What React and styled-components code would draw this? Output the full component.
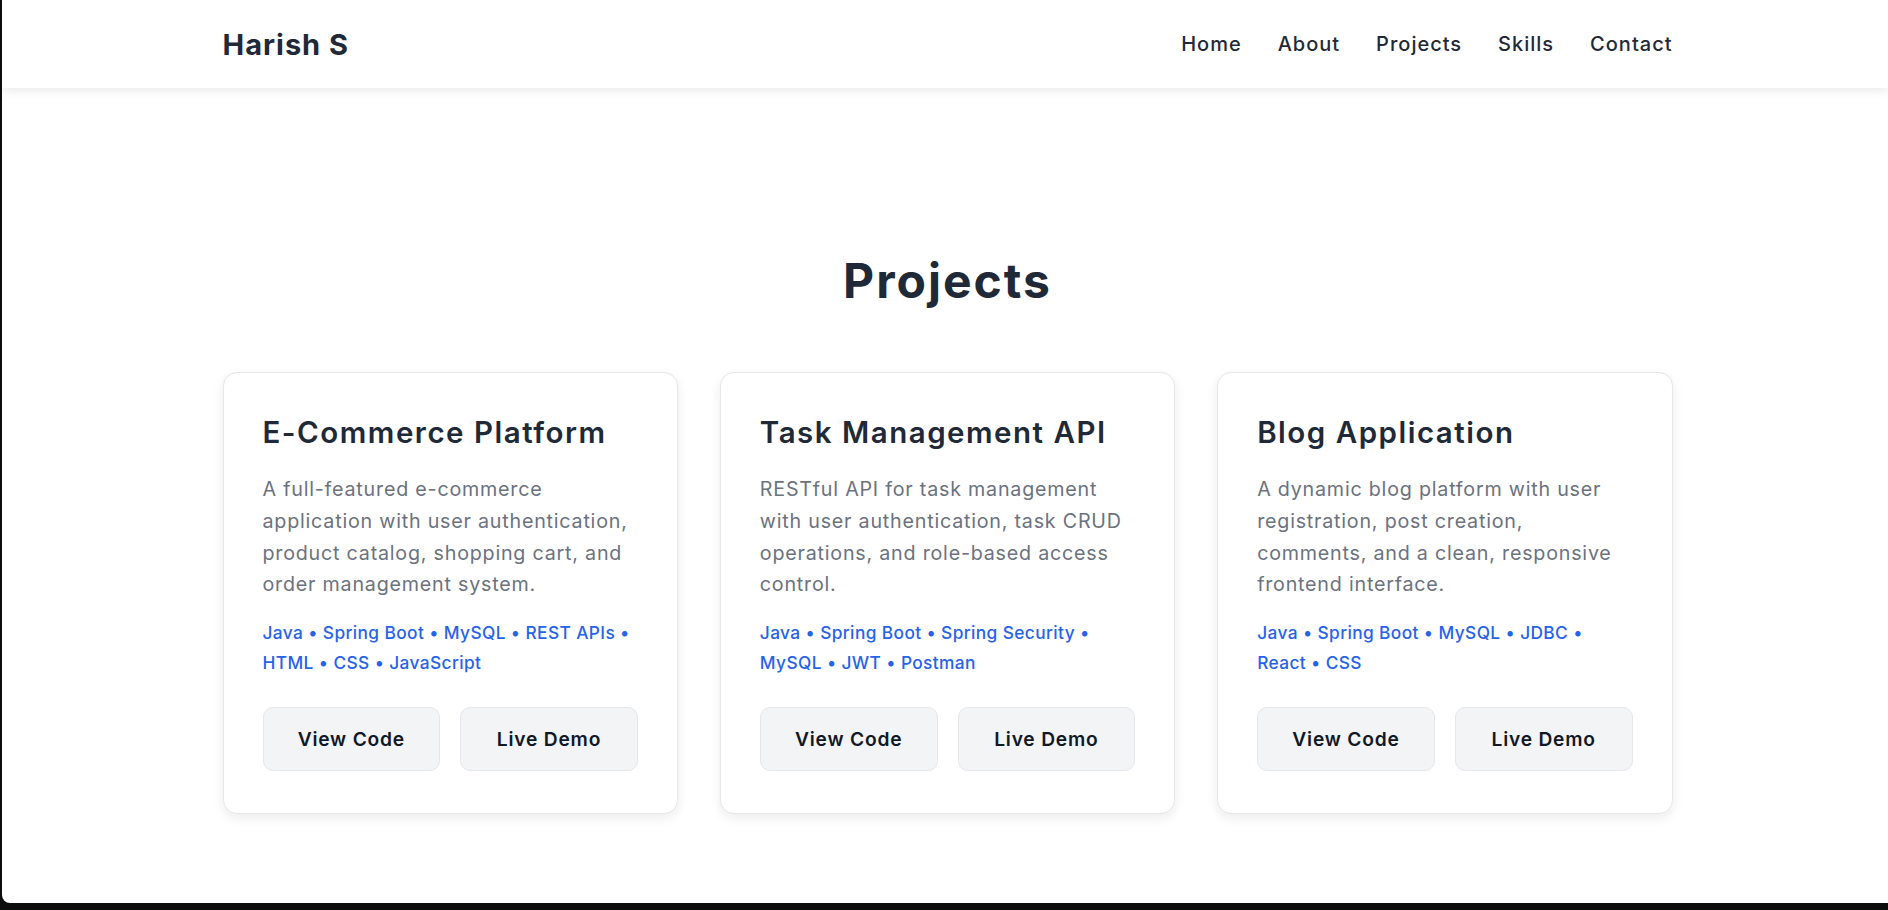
import React from 'react';
import styled, { createGlobalStyle } from 'styled-components';

const GlobalStyle = createGlobalStyle`
  * {
    box-sizing: border-box;
  }

  html, body {
    margin: 0;
    padding: 0;
    background: #0d0d0d;
    font-family: Inter, "Open Sans", Arial, sans-serif;
    color: #1f2937;
  }
`;

const projects = [
  {
    title: 'E-Commerce Platform',
    description:
      'A full-featured e-commerce application with user authentication, product catalog, shopping cart, and order management system.',
    tech: ['Java', 'Spring Boot', 'MySQL', 'REST APIs', 'HTML', 'CSS', 'JavaScript'],
  },
  {
    title: 'Task Management API',
    description:
      'RESTful API for task management with user authentication, task CRUD operations, and role-based access control.',
    tech: ['Java', 'Spring Boot', 'Spring Security', 'MySQL', 'JWT', 'Postman'],
  },
  {
    title: 'Blog Application',
    description:
      'A dynamic blog platform with user registration, post creation, comments, and a clean, responsive frontend interface.',
    tech: ['Java', 'Spring Boot', 'MySQL', 'JDBC', 'React', 'CSS'],
  },
];

const navLinks = ['Home', 'About', 'Projects', 'Skills', 'Contact'];

const Page = styled.div`
  margin-left: 2px;
  height: 903px;
  background: #ffffff;
  border-bottom-left-radius: 8px;
  overflow: hidden;
  display: flex;
  flex-direction: column;
`;

const NavBar = styled.header`
  height: 88px;
  flex-shrink: 0;
  padding-left: 5px;
  background: #ffffff;
  box-shadow: 0 2px 10px rgba(0, 0, 0, 0.1);
  position: relative;
  z-index: 2;
`;

const NavInner = styled.div`
  width: 1450px;
  height: 100%;
  margin: 0 auto;
  display: flex;
  align-items: center;
  justify-content: space-between;
`;

const Logo = styled.div`
  font-size: 29px;
  font-weight: 700;
  color: #1f2937;
  letter-spacing: 1px;
`;

const NavList = styled.nav`
  display: flex;
  align-items: center;
  gap: 36px;
`;

const NavLink = styled.a`
  font-size: 20px;
  font-weight: 500;
  letter-spacing: 1px;
  color: #1f2937;
  text-decoration: none;
  cursor: pointer;
`;

const Section = styled.section`
  padding: 164px 0 0 5px;
`;

const SectionTitle = styled.h2`
  margin: 0 0 62px;
  text-align: center;
  font-size: 48px;
  line-height: 1.2;
  font-weight: 700;
  letter-spacing: 2px;
  color: #1f2937;
`;

const Grid = styled.div`
  width: 1450px;
  margin: 0 auto;
  display: grid;
  grid-template-columns: repeat(3, 1fr);
  gap: 42px;
`;

const Card = styled.article`
  height: 442px;
  background: #ffffff;
  border: 1px solid #e5e7eb;
  border-radius: 14px;
  padding: 40px 39px 0;
  box-shadow: 0 4px 12px rgba(0, 0, 0, 0.08);
  display: flex;
  flex-direction: column;
`;

const CardTitle = styled.h3`
  margin: 0 0 23px;
  font-size: 29.5px;
  line-height: 1.3;
  font-weight: 600;
  letter-spacing: 1.5px;
  color: #1f2937;
`;

const Description = styled.p`
  margin: 0 0 17px;
  font-size: 19.7px;
  line-height: 31.8px;
  letter-spacing: 0.78px;
  color: #6b7280;
`;

const TechList = styled.p`
  margin: 0 0 30px;
  font-size: 17.3px;
  line-height: 1.7;
  font-weight: 500;
  letter-spacing: 0.4px;
  color: #2563eb;
`;

const ButtonRow = styled.div`
  display: flex;
  gap: 20px;
`;

const Button = styled.a`
  flex: 1;
  height: 64px;
  display: flex;
  align-items: center;
  justify-content: center;
  background: #f3f4f6;
  border: 1px solid #e5e7eb;
  border-radius: 10px;
  font-size: 19.2px;
  font-weight: 600;
  letter-spacing: 0.8px;
  color: #111827;
  text-decoration: none;
  cursor: pointer;
`;

function ProjectCard({ project }) {
  return (
    <Card>
      <CardTitle>{project.title}</CardTitle>
      <Description>{project.description}</Description>
      <TechList>{project.tech.join(' • ')}</TechList>
      <ButtonRow>
        <Button>View Code</Button>
        <Button>Live Demo</Button>
      </ButtonRow>
    </Card>
  );
}

export default function App() {
  return (
    <>
      <GlobalStyle />
      <Page>
        <NavBar>
          <NavInner>
            <Logo>Harish S</Logo>
            <NavList>
              {navLinks.map((link) => (
                <NavLink key={link}>{link}</NavLink>
              ))}
            </NavList>
          </NavInner>
        </NavBar>
        <Section>
          <SectionTitle>Projects</SectionTitle>
          <Grid>
            {projects.map((project) => (
              <ProjectCard key={project.title} project={project} />
            ))}
          </Grid>
        </Section>
      </Page>
    </>
  );
}
